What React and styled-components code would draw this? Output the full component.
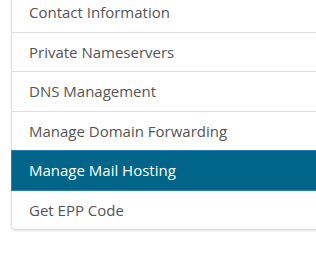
import React from 'react'
import styled, { createGlobalStyle } from 'styled-components'

const GlobalStyle = createGlobalStyle`
  html, body {
    margin: 0;
    padding: 0;
    background: #fff;
  }
  body {
    font-family: 'Open Sans', 'Liberation Sans', sans-serif;
  }
`

const Page = styled.div`
  padding: 0 0 4px 11px;
  margin-top: -8px;
  overflow: hidden;
`

const List = styled.div`
  margin-right: -12px;
  border-radius: 4px;
  box-shadow: 0 1px 2px rgba(0, 0, 0, 0.12);
  font-size: 15px;
`

const Item = styled.a`
  display: block;
  position: relative;
  padding: 10px 17px;
  margin-bottom: -1px;
  line-height: 18.57px;
  color: ${(p) => (p.$active ? '#fff' : '#555')};
  background: ${(p) => (p.$active ? '#006588' : '#fff')};
  border: 1px solid ${(p) => (p.$active ? '#2f7fb0' : '#e0e0e0')};
  z-index: ${(p) => (p.$active ? 2 : 1)};
  text-decoration: none;

  &:last-child {
    margin-bottom: 0;
    border-bottom-left-radius: 4px;
    border-bottom-right-radius: 4px;
  }
`

const items = [
  'Contact Information',
  'Private Nameservers',
  'DNS Management',
  'Manage Domain Forwarding',
  'Manage Mail Hosting',
  'Get EPP Code',
]

export default function App() {
  return (
    <Page>
      <GlobalStyle />
      <List>
        {items.map((label) => (
          <Item key={label} href='#' $active={label === 'Manage Mail Hosting'}>
            {label}
          </Item>
        ))}
      </List>
    </Page>
  )
}
